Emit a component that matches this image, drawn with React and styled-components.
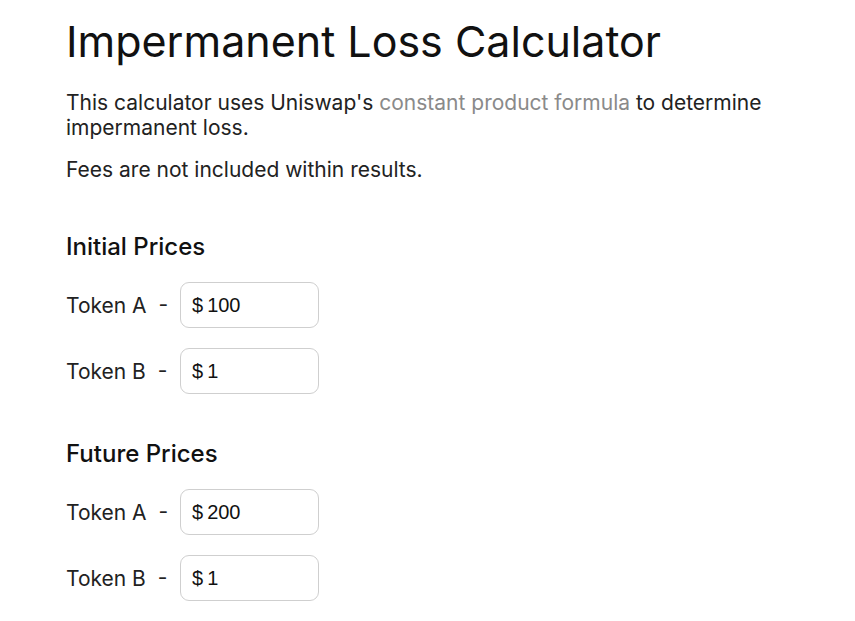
import React from "react";
import styled, { createGlobalStyle } from "styled-components";

const Global = createGlobalStyle`
  body {
    margin: 0;
    background: #fff;
    font-family: Inter, "Open Sans", sans-serif;
    color: #1a1a1a;
  }
`;

const Page = styled.main`
  padding: 14px 0 0 66px;
  width: 740px;
`;

const Title = styled.h1`
  margin: 0 0 22px;
  font-size: 43px;
  font-weight: 400;
  line-height: 54px;
  color: #111;
`;

const Text = styled.p`
  margin: 0 0 17px;
  font-size: 21px;
  line-height: 25px;
  font-weight: 400;
  color: #222;
`;

const Link = styled.a`
  color: #8a8a8a;
  text-decoration: none;
`;

const Section = styled.section`
  margin-top: ${(p) => p.$top}px;
`;

const Heading = styled.h2`
  margin: 0 0 20px;
  font-size: 24px;
  font-weight: 500;
  line-height: 30px;
  color: #111;
`;

const Row = styled.div`
  display: flex;
  align-items: center;
  margin-bottom: 20px;
`;

const Label = styled.label`
  width: 114px;
  font-size: 21px;
  color: #222;
  white-space: pre;
`;

const Field = styled.div`
  display: flex;
  align-items: center;
  width: 139px;
  height: 46px;
  box-sizing: border-box;
  border: 1px solid #cfcfcf;
  border-radius: 9px;
  padding-left: 11px;
  font-family: "Liberation Sans", Arial, sans-serif;
  font-size: 20px;
  color: #111;
`;

const Input = styled.input`
  border: none;
  outline: none;
  width: 100%;
  padding: 0 0 0 4px;
  font: inherit;
  color: inherit;
  background: transparent;
`;

const PriceRow = ({ label, value }) => (
  <Row>
    <Label>{label}</Label>
    <Field>
      $<Input defaultValue={value} />
    </Field>
  </Row>
);

const App = () => (
  <>
    <Global />
    <Page>
      <Title>Impermanent Loss Calculator</Title>
      <Text>
        This calculator uses Uniswap's{" "}
        <Link href="#">constant product formula</Link> to determine
        <br />
        impermanent loss.
      </Text>
      <Text>Fees are not included within results.</Text>
      <Section $top={50}>
        <Heading>Initial Prices</Heading>
        <PriceRow label="Token A  -" value="100" />
        <PriceRow label="Token B  -" value="1" />
      </Section>
      <Section $top={45}>
        <Heading>Future Prices</Heading>
        <PriceRow label="Token A  -" value="200" />
        <PriceRow label="Token B  -" value="1" />
      </Section>
    </Page>
  </>
);

export default App;
